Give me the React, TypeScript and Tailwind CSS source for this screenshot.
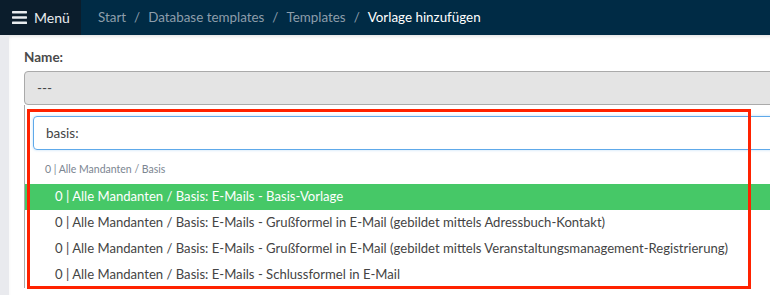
import { useState } from 'react';

const crumbs = ['Start', 'Database templates', 'Templates'];

const options = [
  '0 | Alle Mandanten / Basis: E-Mails - Basis-Vorlage',
  '0 | Alle Mandanten / Basis: E-Mails - Grußformel in E-Mail (gebildet mittels Adressbuch-Kontakt)',
  '0 | Alle Mandanten / Basis: E-Mails - Grußformel in E-Mail (gebildet mittels Veranstaltungsmanagement-Registrierung)',
  '0 | Alle Mandanten / Basis: E-Mails - Schlussformel in E-Mail',
];

export default function App() {
  const [query, setQuery] = useState('basis:');
  const [active, setActive] = useState(0);

  return (
    <div className="relative h-[295px] w-[770px] overflow-hidden bg-white font-['Lato',sans-serif] text-[#444]">
      <header className="flex h-[35px] items-center bg-[#002b45]">
        <div className="flex h-full w-[81px] items-center gap-[7px] bg-[#0b1d2c] pl-[12px] text-[14px] text-[#e8ecef]">
          <svg width="15" height="13" viewBox="0 0 15 13" fill="currentColor">
            <rect x="0" y="0" width="15" height="2.4" rx="0.6" />
            <rect x="0" y="5.3" width="15" height="2.4" rx="0.6" />
            <rect x="0" y="10.6" width="15" height="2.4" rx="0.6" />
          </svg>
          <span>Menü</span>
        </div>
        <nav className="flex items-center pl-[17px] text-[13.4px] text-[#8d9eab]">
          {crumbs.map((c) => (
            <span key={c} className="flex items-center">
              <span>{c}</span>
              <span className="px-[8px]">/</span>
            </span>
          ))}
          <span className="text-white">Vorlage hinzufügen</span>
        </nav>
      </header>

      <div className="flex h-[260px]">
        <div className="w-[9px] shrink-0 bg-[#e9eaee]" />
        <main className="w-[820px] shrink-0 bg-white pl-[15px] pt-[12px] shadow-[inset_0_3px_4px_-2px_rgba(0,0,0,0.15)]">
          <label className="block text-[13.5px] font-bold leading-[20px] text-[#4a4a4a]">Name:</label>
          <div className="mt-[4px] flex h-[34px] items-center rounded-[4px] border border-[#aaa] bg-[#e4e4e4] pl-[12px] text-[13.5px] text-[#444]">
            ---
          </div>
          <div className="border-x border-[#aaa] bg-white">
            <div className="px-[8px] pt-[11px]">
              <input
                value={query}
                onChange={(e) => setQuery(e.target.value)}
                className="h-[34px] w-full rounded-[4px] border border-[#5ea9ea] px-[12px] text-[13.5px] text-[#444] shadow-[0_0_3px_rgba(94,169,234,0.4)] outline-none"
              />
            </div>
            <div className="pl-[20px] pt-[11px] text-[10.5px] leading-[16px] text-[#7b8591]">0 | Alle Mandanten / Basis</div>
            <ul className="mt-[7px] text-[13.1px]">
              {options.map((o, i) => (
                <li
                  key={o}
                  onMouseEnter={() => setActive(i)}
                  className={`flex h-[26px] items-center whitespace-nowrap pl-[30px] ${i === active ? 'bg-[#46c867] text-white' : 'text-[#444]'}`}
                >
                  {o}
                </li>
              ))}
            </ul>
          </div>
        </main>
      </div>

      <div className="pointer-events-none absolute left-[27px] top-[109px] h-[180px] w-[724px] border-[3px] border-[#ff2200]" />
    </div>
  );
}
